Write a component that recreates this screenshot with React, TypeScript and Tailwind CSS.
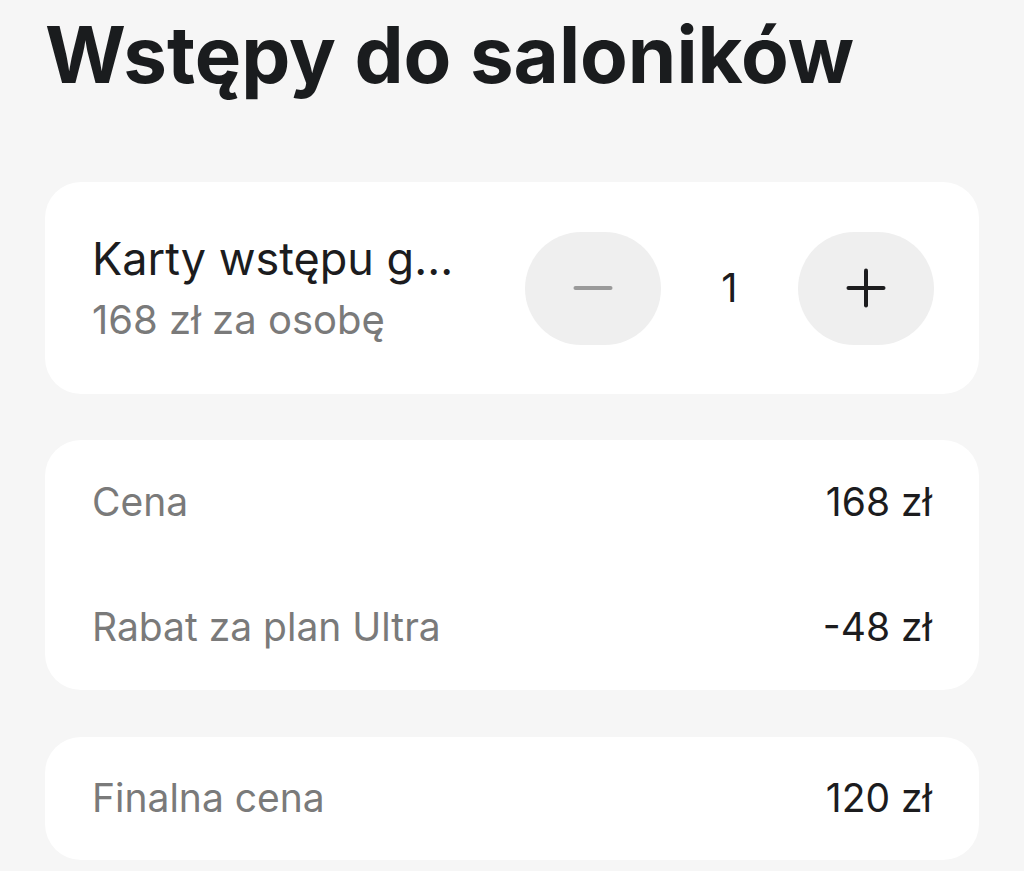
import { Minus, Plus } from 'lucide-react';

const rows = [
  { label: 'Cena', value: '168 zł' },
  { label: 'Rabat za plan Ultra', value: '-48 zł' },
];

export default function App() {
  return (
    <div className="min-h-[871px] bg-[#f6f6f6] px-[45px] pt-[9px] font-['Inter',sans-serif]">
      {/* Title */}
      <h1 className="text-[78px] font-bold leading-[92px] text-[#1a1c1e]">
        Wstępy do saloników
      </h1>

      {/* Quantity card */}
      <div className="mt-[81px] flex h-[212px] items-center rounded-[36px] bg-white pl-[47px] pr-[45px]">
        <div className="flex-1 min-w-0">
          <div className="text-[45px] leading-[54px] text-[#1c1c1e]">Karty wstępu g...</div>
          <div className="mt-[10px] text-[40px] leading-[48px] text-[#7a7a7a]">168 zł za osobę</div>
        </div>
        <div className="flex items-center">
          <button className="flex h-[113px] w-[136px] items-center justify-center rounded-full bg-[#efefef]">
            <Minus className="h-[60px] w-[60px] text-[#9a9a9a]" strokeWidth={1.6} />
          </button>
          <div className="w-[137px] text-center text-[40px] text-[#1c1c1e]">1</div>
          <button className="flex h-[113px] w-[136px] items-center justify-center rounded-full bg-[#efefef]">
            <Plus className="h-[60px] w-[60px] text-[#1c1c1e]" strokeWidth={1.6} />
          </button>
        </div>
      </div>

      {/* Price breakdown */}
      <div className="mt-[46px] flex flex-col rounded-[36px] bg-white px-[47px]">
        {rows.map(r => (
          <div key={r.label} className="flex h-[125px] items-center justify-between text-[39px]">
            <span className="text-[#7a7a7a]">{r.label}</span>
            <span className="text-[#1c1c1e]">{r.value}</span>
          </div>
        ))}
      </div>

      {/* Final price */}
      <div className="mt-[47px] flex h-[123px] items-center justify-between rounded-[36px] bg-white px-[47px] text-[39px]">
        <span className="text-[#7a7a7a]">Finalna cena</span>
        <span className="text-[#1c1c1e]">120 zł</span>
      </div>
    </div>
  );
}
